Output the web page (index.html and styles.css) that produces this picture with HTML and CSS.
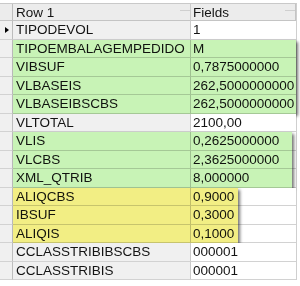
FILE: index.html
```html
<!DOCTYPE html>
<html>
<head>
<meta charset="utf-8">
<link rel="stylesheet" href="styles.css">
</head>
<body>
<div class="grid">
  <div class="row head">
    <div class="ind"></div>
    <div class="c1">Row 1<span class="tick"></span></div>
    <div class="c2">Fields<span class="tick"></span></div>
  </div>
  <div class="row">
    <div class="ind"><span class="arrow"></span></div>
    <div class="c1">TIPODEVOL</div>
    <div class="c2">1</div>
  </div>
  <div class="grp green g1">
    <div class="row"><div class="ind"></div><div class="c1">TIPOEMBALAGEMPEDIDO</div><div class="c2">M</div></div>
    <div class="row"><div class="ind"></div><div class="c1">VIBSUF</div><div class="c2">0,7875000000</div></div>
    <div class="row"><div class="ind"></div><div class="c1">VLBASEIS</div><div class="c2">262,5000000000</div></div>
    <div class="row"><div class="ind"></div><div class="c1">VLBASEIBSCBS</div><div class="c2">262,5000000000</div></div>
  </div>
  <div class="row"><div class="ind"></div><div class="c1">VLTOTAL</div><div class="c2">2100,00</div></div>
  <div class="grp green g2">
    <div class="row"><div class="ind"></div><div class="c1">VLIS</div><div class="c2">0,2625000000</div></div>
    <div class="row"><div class="ind"></div><div class="c1">VLCBS</div><div class="c2">2,3625000000</div></div>
    <div class="row"><div class="ind"></div><div class="c1">XML_QTRIB</div><div class="c2">8,000000</div></div>
  </div>
  <div class="grp yellow g3">
    <div class="row"><div class="ind"></div><div class="c1">ALIQCBS</div><div class="c2">0,9000</div></div>
    <div class="row"><div class="ind"></div><div class="c1">IBSUF</div><div class="c2">0,3000</div></div>
    <div class="row"><div class="ind"></div><div class="c1">ALIQIS</div><div class="c2">0,1000</div></div>
  </div>
  <div class="row"><div class="ind"></div><div class="c1">CCLASSTRIBIBSCBS</div><div class="c2">000001</div></div>
  <div class="row"><div class="ind"></div><div class="c1">CCLASSTRIBIS</div><div class="c2">000001</div></div>
</div>
</body>
</html>
```

FILE: styles.css
```css
* { box-sizing: border-box; }
html, body { margin: 0; padding: 0; background: #fff; }
body {
  width: 300px;
  height: 286px;
  overflow: hidden;
  font-family: "Liberation Sans", Arial, sans-serif;
  font-size: 13.5px;
  color: #141414;
}
.grid {
  margin-top: 3px;
  width: 297px;
  border-top: 1px solid #c9c9c9;
  border-right: 1px solid #cfcfcf;
}
.row {
  display: grid;
  grid-template-columns: 13px 178px 105px;
  height: 18.5px;
}
.row > div {
  border-bottom: 1px solid #d2d2d2;
  border-right: 1px solid #cbcbcb;
  display: flex;
  align-items: center;
  white-space: nowrap;
  overflow: hidden;
  position: relative;
}
.row > .c2 { border-right: none; background: #fff; padding-left: 2px; }
.row > .c1 { background: #f0f0f0; padding-left: 3px; }
.row > .ind { background: #f0f0f0; border-right-color: #bdbdbd; }
.head { height: 17px; }
.head > div { background: #ececec !important; border-bottom-color: #c4c4c4; }
.head > .c2 { border-right: 1px solid #c4c4c4; }
.head > .c1 { padding-left: 3px; }
.tick {
  position: absolute;
  top: 0;
  right: 0;
  width: 10px;
  height: 7px;
  border-bottom: 1px solid #cfcfcf;
}
.arrow {
  width: 0;
  height: 0;
  margin-left: 5px;
  border-top: 3.5px solid transparent;
  border-bottom: 3.5px solid transparent;
  border-left: 4px solid #000;
}
.grp { position: relative; }
.grp .c1 { background: #fff; }
.grp::after {
  content: "";
  position: absolute;
  top: 0;
  bottom: 0;
  left: 13px;
  right: 0;
  mix-blend-mode: multiply;
  pointer-events: none;
  box-shadow: 2px 2px 3px rgba(0, 0, 0, 0.55);
}
.green::after { background: #c8f3b6; }
.yellow::after { background: #f2ee84; }
.g2::after { right: 4px; }
.g3::after { right: 58px; }
```
